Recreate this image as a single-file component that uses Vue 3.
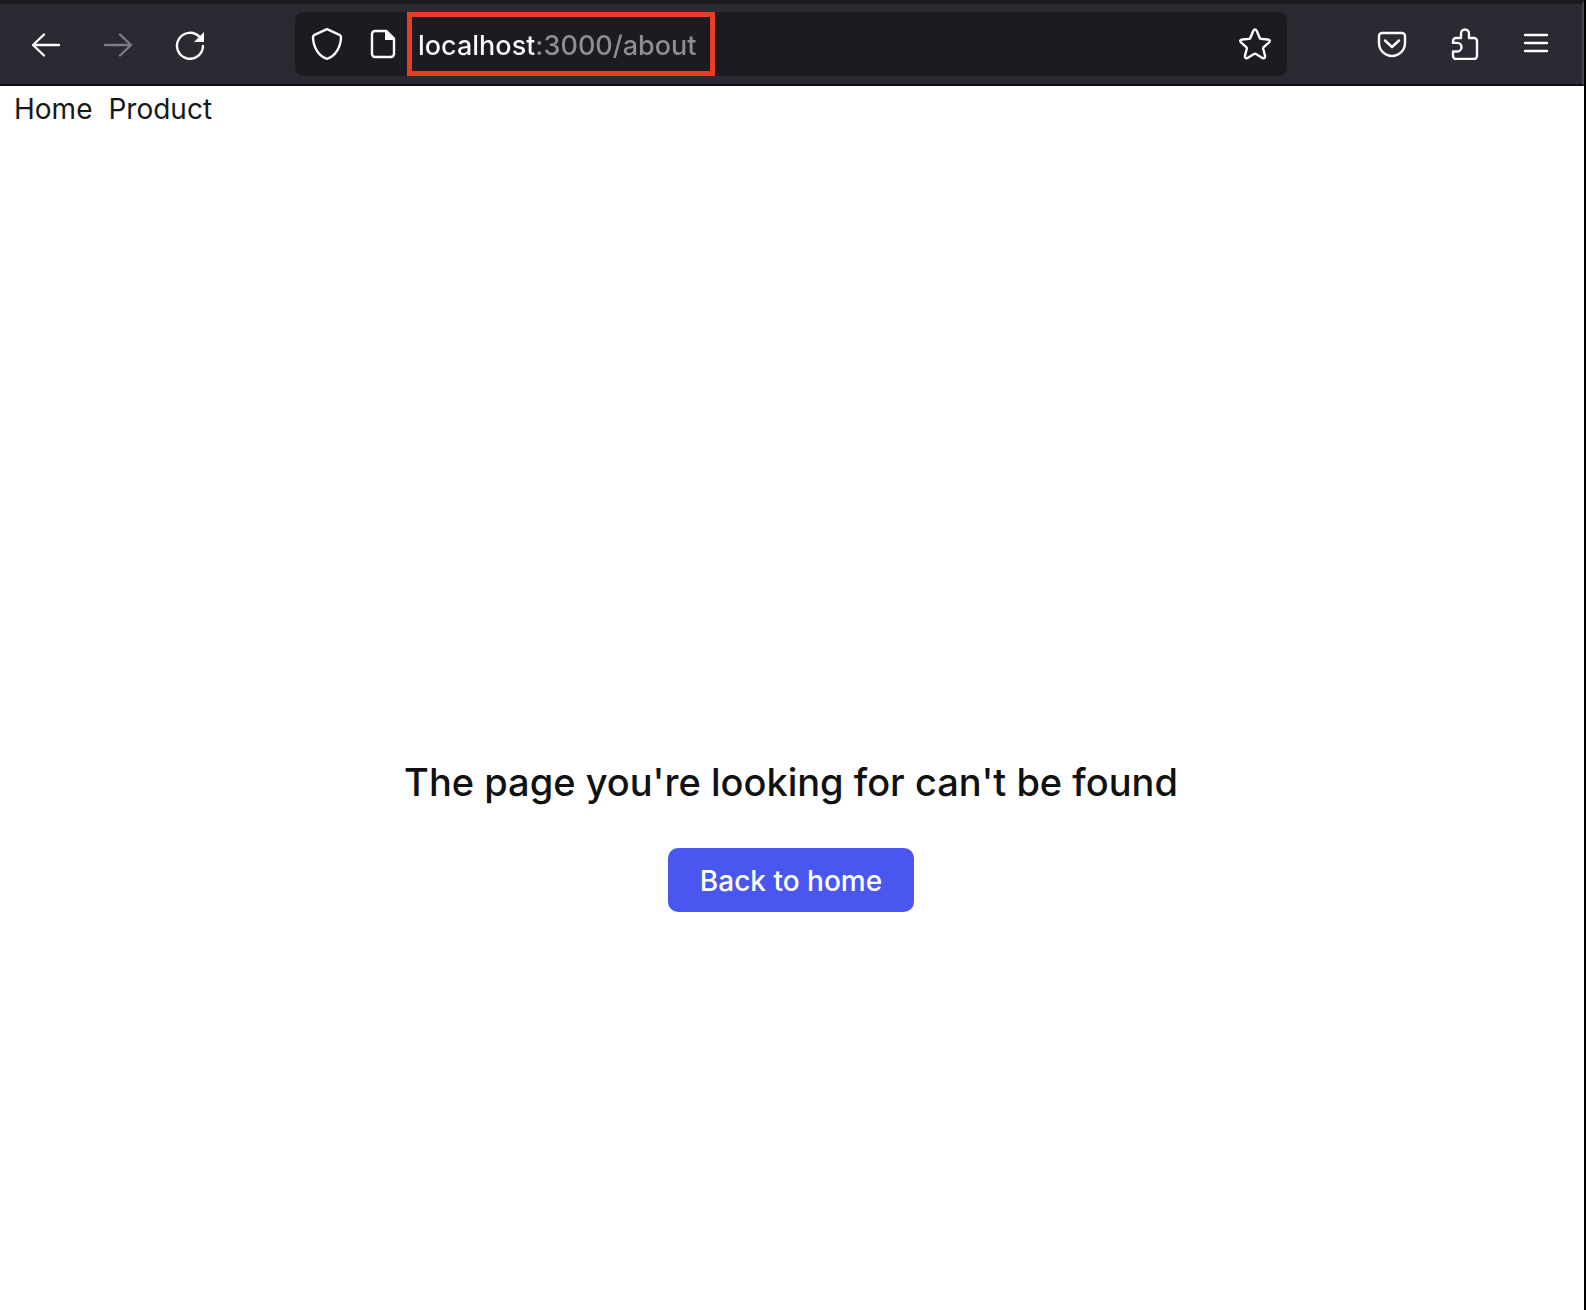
<script setup>
import { ref } from 'vue'

const address = ref('localhost:3000/about')
</script>

<template>
  <div class="window">
    <header class="toolbar">
      <div class="history">
        <button type="button" class="icon-btn" aria-label="Back">
          <svg width="32" height="32" viewBox="0 0 32 32"><path d="M29 17H4M14 6.500L3 17L14 27.500" /></svg>
        </button>
        <button type="button" class="icon-btn dim" aria-label="Forward" disabled>
          <svg width="32" height="32" viewBox="0 0 32 32"><path d="M3 17h25M18 6.500L29 17L18 27.500" /></svg>
        </button>
        <button type="button" class="icon-btn" aria-label="Reload">
          <svg width="32" height="32" viewBox="0 0 32 32">
            <path d="M29 18A13 13 0 1 1 25.600 9" />
            <path class="solid" d="M30 4V14H20Z" />
          </svg>
        </button>
      </div>

      <div class="urlbar">
        <button type="button" class="icon-btn" aria-label="Tracking protection">
          <svg width="32" height="32" viewBox="0 0 32 32">
            <path d="M16 1.200L29 7.200Q30 7.800 30 9.300C29.700 20 24 28.200 16 30.800C8 28.200 2.300 20 2 9.300Q2 7.800 3 7.200Z" />
          </svg>
        </button>
        <button type="button" class="icon-btn" aria-label="Site information">
          <svg width="32" height="32" viewBox="0 0 32 32">
            <path d="M8 3H19.500L27 10.500V26a3 3 0 0 1-3 3H8a3 3 0 0 1-3-3V6a3 3 0 0 1 3-3Z" />
            <path class="solid" d="M18 2V12H28Z" />
          </svg>
        </button>
        <input v-model="address" class="address" type="text" aria-label="Address" spellcheck="false" />
        <button type="button" class="icon-btn star" aria-label="Bookmark this page">
          <svg width="32" height="32" viewBox="0 0 32 32">
            <path d="M14.200 3Q16 -0.200 17.800 3L20.700 10Q21 10.800 22 10.900L28.800 11.500Q32.300 12.100 29.800 14.700L24.700 19.200Q24 19.800 24.200 20.800L26 27.600Q26.300 31.200 23 29.800L17 26Q16 25.400 15 26L9 29.800Q5.700 31.200 6 27.600L7.800 20.800Q8 19.800 7.300 19.200L2.200 14.700Q-0.300 12.100 3.200 11.500L10 10.900Q11 10.800 11.300 10Z" />
          </svg>
        </button>
      </div>

      <div class="tools">
        <button type="button" class="icon-btn" aria-label="Save to Pocket">
          <svg width="32" height="32" viewBox="0 0 32 32">
            <path d="M6 5H26a3 3 0 0 1 3 3V15a13 13 0 0 1-26 0V8a3 3 0 0 1 3-3Z" />
            <path d="M9 12.500L16 19L23 12.500" />
          </svg>
        </button>
        <button type="button" class="icon-btn" aria-label="Extensions">
          <svg width="32" height="32" viewBox="0 0 32 32">
            <path d="M8 10H13V5.500a4 4 0 0 1 8 0V10H26a3 3 0 0 1 3 3V28a3 3 0 0 1-3 3H8a3 3 0 0 1-3-3V23.500H9.200a4.300 4.300 0 0 0 0-8.600H5V13a3 3 0 0 1 3-3Z" />
          </svg>
        </button>
        <button type="button" class="icon-btn" aria-label="Open application menu">
          <svg width="32" height="32" viewBox="0 0 32 32"><path d="M5 7H27M5 15H27M5 23H27" /></svg>
        </button>
      </div>
    </header>

    <nav class="nav">
      <a href="/">Home</a>
      <a href="/product">Product</a>
    </nav>

    <main class="missing">
      <h1>The page you're looking for can't be found</h1>
      <a class="back" href="/">Back to home</a>
    </main>
  </div>
</template>

<style>
body {
  margin: 0;
  background: #fff;
}
</style>

<style scoped>
.window {
  box-sizing: border-box;
  min-height: 100vh;
  display: flex;
  flex-direction: column;
  border-right: 2px solid #000;
  font-family: Inter, "Liberation Sans", sans-serif;
  color: #18181b;
}

.toolbar {
  display: flex;
  align-items: center;
  height: 80px;
  padding: 0 30px;
  background: #2b2a33;
  border-top: 4px solid #1c1b22;
  border-bottom: 2px solid #0c0b10;
  border-right: 2px solid #45444b;
}

.history,
.tools {
  display: flex;
  gap: 40px;
}

.icon-btn {
  display: block;
  flex: none;
  padding: 0;
  border: 0;
  background: none;
  color: #fbfbfe;
}

.icon-btn.dim {
  color: #7d7c82;
}

.icon-btn svg {
  display: block;
  fill: none;
  stroke: currentColor;
  stroke-width: 2.4;
  stroke-linecap: round;
  stroke-linejoin: round;
}

.icon-btn .solid {
  fill: currentColor;
  stroke: none;
}

.urlbar {
  flex: 1;
  min-width: 0;
  display: flex;
  align-items: center;
  height: 64px;
  margin: 0 89px;
  padding: 0 16px;
  border-radius: 8px;
  background: #1c1b22;
}

.urlbar .icon-btn + .icon-btn {
  margin: 0 8px 0 24px;
}

.address {
  box-sizing: border-box;
  width: 308px;
  height: 64px;
  padding: 2px 6px 0;
  border: 5px solid #e83d24;
  outline: 0;
  font: 450 27px/32px Inter, "Liberation Sans", sans-serif;
  color: transparent;
  caret-color: #fff;
  background: linear-gradient(to right, #fbfbfe 122px, #8f8e94 122px) text;
}

.star {
  margin-left: auto;
}

.nav {
  display: flex;
  gap: 16px;
  padding: 5px 14px 3px;
  font-size: 28px;
  line-height: 36px;
}

.nav a {
  color: inherit;
  text-decoration: none;
}

.missing {
  flex: 1;
  display: flex;
  flex-direction: column;
  align-items: center;
  justify-content: center;
  gap: 36px;
  padding: 224px 2px 0 0;
}

h1 {
  margin: 0;
  font-size: 38px;
  line-height: 60px;
  font-weight: 450;
  color: #111;
}

.back {
  padding: 15px 32px 13px;
  border-radius: 10px;
  background: #4956f0;
  color: #fff;
  font-size: 28px;
  line-height: 36px;
  font-weight: 500;
  text-decoration: none;
}
</style>
